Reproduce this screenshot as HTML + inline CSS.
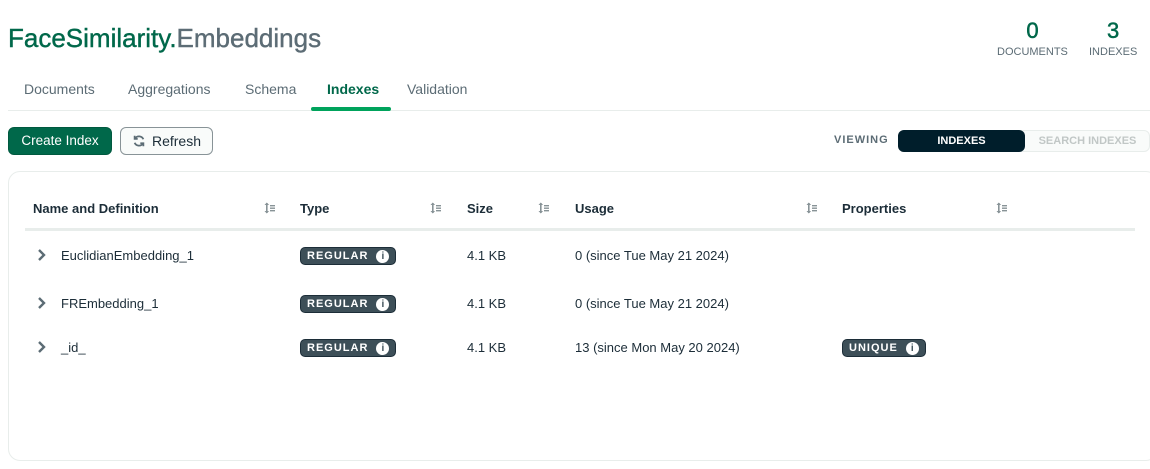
<!DOCTYPE html>
<html><head><style>
*{box-sizing:border-box;margin:0;padding:0}
body{width:1150px;height:469px;background:#fff;font-family:"Liberation Sans",sans-serif;position:relative;overflow:hidden;color:#1c2d38}
.abs{position:absolute;white-space:nowrap}
.title{left:8px;top:23px;font-size:26px;color:#00684a;letter-spacing:0px;-webkit-text-stroke:0.4px currentColor}
.title span{color:#5c6c75}
.stat{text-align:center;color:#5c6c75;font-size:11px}
.stat b{display:block;color:#00684a;font-size:22px;font-weight:normal;margin-bottom:2px;-webkit-text-stroke:0.5px currentColor}
.tab{top:81px;font-size:14px;color:#5c6c75}
.line{left:8px;right:0;top:110px;height:1px;background:#e8edeb}
.btn{top:127px;height:28px;border-radius:6px;font-size:14px;line-height:26px;text-align:center}
.th{top:201px;font-size:13px;font-weight:bold;color:#1c2d38}
.td{font-size:13px;color:#1c2d38}
.badge{background:#3d4f58;border:1px solid #1c2d38;color:#fff;border-radius:5px;font-size:11px;font-weight:bold;letter-spacing:1px;height:18px;padding:0 6px;display:flex;align-items:center}
.badge i{display:block;width:13px;height:13px;border-radius:50%;background:#fff;color:#3d4f58;font-style:normal;font-size:10px;font-weight:bold;line-height:13px;text-align:center;letter-spacing:0;margin-left:8px}
</style></head><body>
<div class="abs title">FaceSimilarity.<span>Embeddings</span></div>
<div class="abs stat" style="left:997px;top:18px"><b>0</b>DOCUMENTS</div>
<div class="abs stat" style="left:1089px;top:18px"><b>3</b>INDEXES</div>
<div class="abs tab" style="left:24px">Documents</div>
<div class="abs tab" style="left:128px">Aggregations</div>
<div class="abs tab" style="left:245px">Schema</div>
<div class="abs tab" style="left:327px;color:#00684a;font-weight:bold">Indexes</div>
<div class="abs tab" style="left:407px">Validation</div>
<div class="abs line"></div>
<div class="abs" style="left:311px;top:107px;width:80px;height:4px;border-radius:3px;background:#00a35c"></div>
<div class="abs btn" style="left:8px;width:104px;background:#00684a;color:#fff;border:1px solid #00593f;font-size:13.5px">Create Index</div>
<div class="abs btn" style="left:120px;width:93px;background:#f9fbfa;border:1px solid #889397;color:#1c2d38"><svg width="14" height="14" viewBox="0 0 16 16" style="vertical-align:-2px;margin-right:6px" fill="none" stroke="#5c6c75" stroke-width="2"><path d="M13 6A5.5 5.5 0 0 0 3.5 5"/><path d="M3 10a5.5 5.5 0 0 0 9.5 1"/><path d="M3 2v3.5h3.5"/><path d="M13 14v-3.5H9.5"/></svg>Refresh</div>
<div class="abs" style="left:834px;top:134px;font-size:11px;font-weight:bold;letter-spacing:1px;color:#5c6c75">VIEWING</div>
<div class="abs" style="left:898px;top:130px;width:252px;height:22px;border:1px solid #e8edeb;border-radius:6px;background:#f9fbfa"></div>
<div class="abs" style="left:898px;top:130px;width:127px;height:22px;border-radius:6px;background:#001e2b;color:#fff;font-size:11px;font-weight:bold;text-align:center;line-height:22px">INDEXES</div>
<div class="abs" style="left:1025px;top:130px;width:125px;height:22px;color:#c1c7c6;font-size:11px;font-weight:bold;text-align:center;line-height:22px">SEARCH INDEXES</div>
<div class="abs" style="left:8px;top:171px;width:1150px;height:290px;border:1px solid #e8edeb;border-radius:12px"></div>
<div class="abs th" style="left:33px">Name and Definition</div>
<div class="abs th" style="left:300px">Type</div>
<div class="abs th" style="left:467px">Size</div>
<div class="abs th" style="left:575px">Usage</div>
<div class="abs th" style="left:842px">Properties</div>
<svg class="abs" style="left:0;top:0" width="1150" height="469">
<defs><g id="s" fill="#889397"><rect x="2" y="1" width="1.6" height="10"/><path d="M0.5 3L2.8 0.5L5.1 3z"/><path d="M0.5 9L2.8 11.5L5.1 9z"/><rect x="6" y="3" width="5" height="1.4"/><rect x="6" y="5.5" width="5" height="1.4"/><rect x="6" y="8" width="5" height="1.4"/></g>
<path id="c" d="M0 0L5 5L0 10" fill="none" stroke="#5c6c75" stroke-width="2.4"/></defs>
<use href="#s" x="264" y="202"/><use href="#s" x="430" y="202"/><use href="#s" x="538" y="202"/><use href="#s" x="806" y="202"/><use href="#s" x="996" y="202"/>
<use href="#c" x="39" y="250"/><use href="#c" x="39" y="298"/><use href="#c" x="39" y="342"/>
</svg>
<div class="abs" style="left:25px;top:228px;width:1110px;height:3px;background:#e8edeb"></div>

<div class="abs td" style="left:61px;top:248px">EuclidianEmbedding_1</div>
<div class="abs badge" style="left:300px;top:247px">REGULAR<i>i</i></div>
<div class="abs td" style="left:467px;top:248px">4.1 KB</div>
<div class="abs td" style="left:575px;top:248px">0 (since Tue May 21 2024)</div>

<div class="abs td" style="left:61px;top:296px">FREmbedding_1</div>
<div class="abs badge" style="left:300px;top:295px">REGULAR<i>i</i></div>
<div class="abs td" style="left:467px;top:296px">4.1 KB</div>
<div class="abs td" style="left:575px;top:296px">0 (since Tue May 21 2024)</div>

<div class="abs td" style="left:61px;top:340px">_id_</div>
<div class="abs badge" style="left:300px;top:339px">REGULAR<i>i</i></div>
<div class="abs td" style="left:467px;top:340px">4.1 KB</div>
<div class="abs td" style="left:575px;top:340px">13 (since Mon May 20 2024)</div>
<div class="abs badge" style="left:842px;top:339px">UNIQUE<i>i</i></div>
</body></html>
